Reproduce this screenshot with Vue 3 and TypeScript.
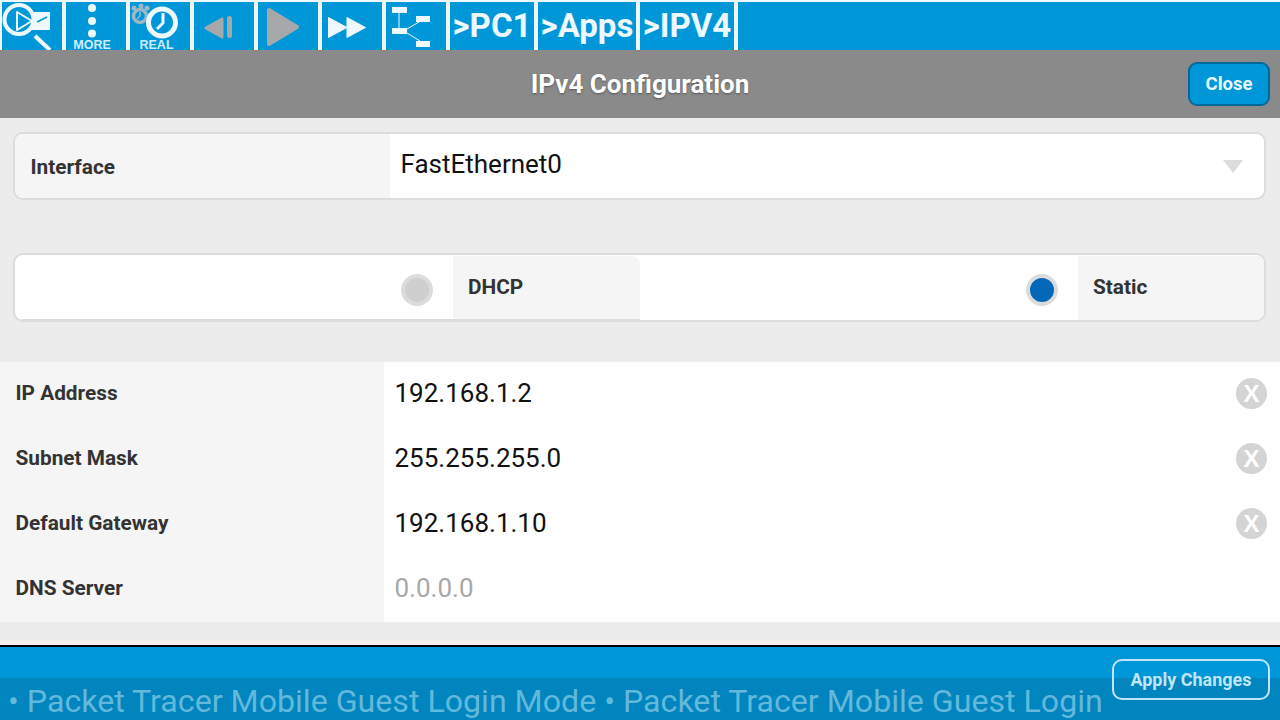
<script setup lang="ts">
interface Row { label: string; value: string; placeholder?: boolean }
const rows: Row[] = [
  { label: 'IP Address', value: '192.168.1.2' },
  { label: 'Subnet Mask', value: '255.255.255.0' },
  { label: 'Default Gateway', value: '192.168.1.10' },
  { label: 'DNS Server', value: '0.0.0.0', placeholder: true },
]
const crumbs = [
  { text: '>PC1', w: 84 },
  { text: '>Apps', w: 98 },
  { text: '>IPV4', w: 94 },
]
</script>

<template>
  <div class="page">
    <div class="toolbar">
      <div class="tool">
        <svg width="60" height="48" viewBox="0 0 60 48">
          <path d="M28 10 L48 10 L48 28 L28 28 Z" fill="#eef9ff" />
          <path d="M35 20 L45 15" stroke="#0097d9" stroke-width="1.5" fill="none" />
          <circle cx="17" cy="17.5" r="14.5" fill="#0097d9" stroke="#eef9ff" stroke-width="4" />
          <path d="M15 10 L30 19 L15 28 Z" fill="none" stroke="#eef9ff" stroke-width="2" stroke-linejoin="round" />
          <path d="M33 34 L48 48" stroke="#eef9ff" stroke-width="4" />
        </svg>
      </div>
      <div class="tool">
        <svg width="60" height="48" viewBox="0 0 60 48">
          <circle cx="26" cy="6" r="4" fill="#eef9ff" />
          <circle cx="26" cy="19" r="4" fill="#eef9ff" />
          <circle cx="26" cy="31.5" r="4" fill="#eef9ff" />
        </svg>
        <span class="tool-label">MORE</span>
      </div>
      <div class="tool">
        <svg width="60" height="48" viewBox="0 0 60 48">
          <circle cx="10" cy="14" r="6.5" fill="none" stroke="#9bb8c6" stroke-width="3.5" />
          <path d="M10 10 V14 L7 17" fill="none" stroke="#9bb8c6" stroke-width="1.5" />
          <circle cx="4" cy="6" r="2.5" fill="#9bb8c6" />
          <circle cx="11" cy="4" r="2.5" fill="#9bb8c6" />
          <circle cx="17" cy="6" r="2.5" fill="#9bb8c6" />
          <circle cx="32" cy="20.5" r="13.5" fill="#0097d9" stroke="#eef9ff" stroke-width="5" />
          <path d="M33 11 V21 L27 27" fill="none" stroke="#eef9ff" stroke-width="3" />
        </svg>
        <span class="tool-label real">REAL</span>
      </div>
      <div class="tool">
        <svg width="60" height="48" viewBox="0 0 60 48">
          <path d="M12 26 L28 17 L28 35 Z" fill="#a6a8aa" stroke="#a6a8aa" stroke-width="3" stroke-linejoin="round" />
          <rect x="33" y="14" width="5" height="22" rx="2.5" fill="#a6a8aa" />
        </svg>
      </div>
      <div class="tool">
        <svg width="60" height="48" viewBox="0 0 60 48">
          <path d="M11 8 L39 25 L11 42 Z" fill="#a6a8aa" stroke="#a6a8aa" stroke-width="4" stroke-linejoin="round" />
        </svg>
      </div>
      <div class="tool">
        <svg width="60" height="48" viewBox="0 0 60 48">
          <path d="M6.500 15.500 L25 25.500 L6.500 35.500 Z M25 15.500 L43.500 25.500 L25 35.500 Z" fill="#eef9ff" stroke="#eef9ff" stroke-width="1" stroke-linejoin="round" />
        </svg>
      </div>
      <div class="tool">
        <svg width="60" height="48" viewBox="0 0 60 48">
          <rect x="6" y="5" width="15" height="6" fill="#eef9ff" />
          <rect x="6" y="26" width="15" height="6" fill="#eef9ff" />
          <rect x="30" y="14" width="14" height="6" fill="#eef9ff" />
          <rect x="30" y="39" width="14" height="6" fill="#eef9ff" />
          <path d="M13 11 V26 M21 27 L33 20 M21 31 L34 39" stroke="#eef9ff" stroke-width="1" fill="none" />
        </svg>
      </div>
      <div v-for="c in crumbs" :key="c.text" class="tool crumb" :style="{ width: c.w + 'px' }">{{ c.text }}</div>
      <div class="tool-rest"></div>
    </div>

    <header class="titlebar">
      <h1 class="title">IPv4 Configuration</h1>
      <button class="close">Close</button>
    </header>

    <main class="content">
      <section class="box interface">
        <div class="box-label iface-label">Interface</div>
        <div class="iface-value">
          <span>FastEthernet0</span>
          <i class="caret"></i>
        </div>
      </section>

      <section class="box radios">
        <div class="radio-spot dhcp-spot"><i class="radio"></i></div>
        <div class="radio-label dhcp-label">DHCP</div>
        <div class="radio-spot static-spot"><i class="radio on"></i></div>
        <div class="radio-label static-label">Static</div>
      </section>

      <section class="form">
        <div v-for="r in rows" :key="r.label" class="row">
          <div class="row-label">{{ r.label }}</div>
          <div class="row-value" :class="{ placeholder: r.placeholder }">
            <span class="value-text">{{ r.value }}</span>
            <i v-if="!r.placeholder" class="clear">X</i>
          </div>
        </div>
      </section>
    </main>

    <footer class="footer">
      <div class="footer-top"></div>
      <div class="ticker">• Packet Tracer Mobile Guest Login Mode • Packet Tracer Mobile Guest Login</div>
      <button class="apply">Apply Changes</button>
    </footer>
  </div>
</template>

<style>
html, body { margin: 0; padding: 0; background: #ececec; }
</style>

<style scoped>
.page {
  width: 1280px;
  height: 720px;
  display: flex;
  flex-direction: column;
  overflow: hidden;
  font-family: Roboto, "Liberation Sans", sans-serif;
  background: #ececec;
  position: relative;
}
.toolbar {
  height: 48px;
  padding: 2px 0 0 2px;
  display: flex;
  gap: 4px;
  background: #eef9ff;
  flex: none;
}
.tool {
  width: 60px;
  height: 48px;
  background: #0097d9;
  position: relative;
  flex: none;
}
.tool svg { display: block; }
.tool-label {
  position: absolute;
  left: 0;
  width: 52px;
  text-align: center;
  bottom: 0;
  font-family: "Liberation Sans", Arial, sans-serif;
  font-weight: 700;
  font-size: 12.500px;
  line-height: 14px;
  height: 14px;
  transform: translateY(2px);
  color: #cdeefc;
}
.tool-label.real { width: 53px; }
.crumb {
  color: #eef9ff;
  font-weight: 700;
  font-size: 33px;
  line-height: 48px;
  text-align: center;
  white-space: nowrap;
}
.tool-rest { flex: 1; background: #0097d9; }
.titlebar {
  height: 68px;
  flex: none;
  background: #8a8a8a;
  display: flex;
  align-items: center;
  justify-content: center;
  position: relative;
}
.title {
  margin: 0;
  font-size: 26px;
  font-weight: 700;
  color: #fff;
  text-shadow: 0 1px 2px #555;
}
.close {
  position: absolute;
  left: 1188px;
  top: 12px;
  width: 82px;
  height: 44px;
  box-sizing: border-box;
  border: 2px solid #00689b;
  border-radius: 9px;
  background: #0097d9;
  color: #e9f8ff;
  font: 700 18.500px Roboto, sans-serif;
  padding: 0 0 1px;
}
.content { flex: 1; display: flex; flex-direction: column; padding-top: 14px; }
.box {
  margin: 0 14px 0 13px;
  box-sizing: border-box;
  border: 2px solid #dcdcdc;
  border-radius: 10px;
  background: #fff;
  display: flex;
  overflow: hidden;
}
.interface { height: 68px; }
.box-label { background: #f5f5f5; }
.iface-label {
  width: 375px;
  box-sizing: border-box;
  padding: 21px 0 0 15.500px;
  font-size: 20.800px;
  line-height: 24px;
  font-weight: 700;
  color: #333;
}
.iface-value {
  flex: 1;
  display: flex;
  align-items: flex-start;
  justify-content: space-between;
  padding: 15px 21px 0 10.500px;
  font-size: 26px;
  line-height: 30px;
  color: #111;
}
.caret {
  margin-top: 11px;
  width: 0;
  height: 0;
  border-left: 10px solid transparent;
  border-right: 10px solid transparent;
  border-top: 13px solid #dcdcdc;
}
.radios { margin-top: 53px; height: 69px; }
.radio-spot {
  display: flex;
  align-items: center;
  justify-content: flex-end;
  flex: none;
  box-sizing: border-box;
}
.dhcp-spot { width: 438px; padding: 6px 20px 0 0; border-bottom: 1px solid #dcdcdc; }
.static-spot { width: 438px; padding: 5px 20px 0 0; }
.radio {
  width: 32px;
  height: 32px;
  box-sizing: border-box;
  border-radius: 50%;
  background: #cfcfcf;
  border: 4px solid #dcdcdc;
}
.radio.on { background: #0468b8; }
.radio-label {
  flex: none;
  background: #f5f5f5;
  box-sizing: border-box;
  padding: 19px 0 0 15px;
  font-size: 20.800px;
  line-height: 24px;
  font-weight: 700;
  color: #333;
}
.dhcp-label { width: 187px; border-radius: 0 8px 0 0; margin-top: 1px; border-bottom: 1px solid #dcdcdc; }
.static-label { flex: 1; margin-top: 1px; }
.form { margin-top: 40px; background: #fff; }
.row { display: flex; height: 65px; }
.row-label {
  width: 384px;
  flex: none;
  box-sizing: border-box;
  background: #f5f5f5;
  padding: 19px 0 0 15.500px;
  font-size: 20.800px;
  line-height: 24px;
  font-weight: 700;
  color: #333;
}
.row-value {
  flex: 1;
  display: flex;
  align-items: center;
  justify-content: space-between;
  padding: 0 13px 0 10.500px;
  font-size: 26px;
  color: #111;
}
.value-text { padding-bottom: 4px; }
.row-value.placeholder { color: #a8a8a8; }
.clear {
  width: 31px;
  height: 31px;
  margin-bottom: 2px;
  border-radius: 50%;
  background: #d4d4d4;
  color: #fff;
  font-family: "Liberation Sans", Arial, sans-serif;
  font-style: normal;
  font-weight: 700;
  font-size: 24px;
  line-height: 31px;
  text-align: center;
}
.footer {
  height: 75px;
  flex: none;
  box-sizing: border-box;
  border-top: 2px solid #000;
  margin-top: auto;
  background: #0097d9;
  position: relative;
  box-shadow: 0 -5px 0 #f3efec;
}
.footer-top { height: 31px; }
.ticker {
  height: 42px;
  background: #0085bf;
  color: #62b9dc;
  font-size: 32.150px;
  line-height: 47px;
  padding-left: 8px;
  white-space: nowrap;
  overflow: hidden;
}
.apply {
  position: absolute;
  left: 1112px;
  top: 12px;
  width: 158px;
  height: 41px;
  box-sizing: border-box;
  border: 2px solid #bfe6f7;
  border-radius: 10px;
  background: transparent;
  color: #bfe6f7;
  font: 700 18px Roboto, sans-serif;
  padding: 0;
}
</style>
